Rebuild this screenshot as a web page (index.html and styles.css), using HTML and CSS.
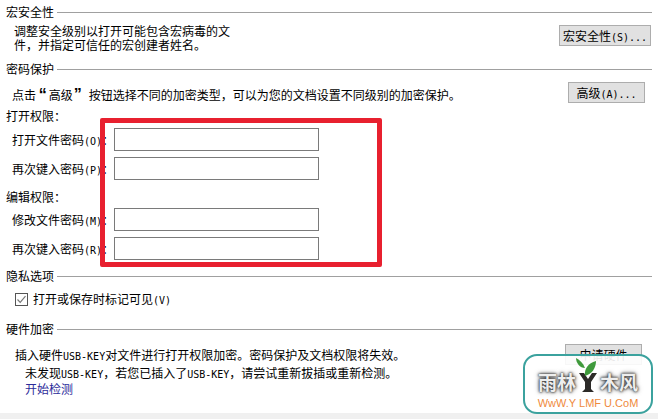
FILE: index.html
```html
<!DOCTYPE html>
<html lang="zh-CN">
<head>
    <meta charset="UTF-8">
    <title>文档加密</title>
    <link rel="stylesheet" href="styles.css">
</head>
<body>
    <div class="panel">
        <section class="group group-macro">
            <div class="group-title"><span>宏安全性</span></div>
            <div class="row">
                <p class="macro-text">调整安全级别以打开可能包含宏病毒的文<br>件，并指定可信任的宏创建者姓名。</p>
                <button class="btn btn-macro">宏安全性<span class="latin">(S)...</span></button>
            </div>
        </section>

        <section class="group group-password">
            <div class="group-title"><span>密码保护</span></div>
            <div class="row">
                <p class="password-text">点击 <span class="quote quote-open">“</span>高级<span class="quote quote-close">”</span>按钮选择不同的加密类型，可以为您的文档设置不同级别的加密保护。</p>
                <button class="btn btn-advanced">高级<span class="latin">(A)...</span></button>
            </div>
        </section>

        <div class="perm-title">打开权限：</div>
        <div class="field">
            <label>打开文件密码<span class="latin">(O)</span>：</label>
            <input type="text">
        </div>
        <div class="field">
            <label>再次键入密码<span class="latin">(P)</span>：</label>
            <input type="text">
        </div>

        <div class="perm-title perm-edit">编辑权限：</div>
        <div class="field">
            <label>修改文件密码<span class="latin">(M)</span>：</label>
            <input type="text">
        </div>
        <div class="field">
            <label>再次键入密码<span class="latin">(R)</span>：</label>
            <input type="text">
        </div>

        <section class="group group-privacy">
            <div class="group-title"><span>隐私选项</span></div>
            <label class="check">
                <svg class="check-box" width="13" height="13" viewBox="0 0 13 13">
                    <rect x="0.5" y="0.5" width="12" height="12" fill="#fff" stroke="#555"/>
                    <path d="M2.5 6.5 L5.2 9.3 L10.5 3.2" fill="none" stroke="#777" stroke-width="1.2"/>
                </svg>
                <span>打开或保存时标记可见<span class="latin">(V)</span></span>
            </label>
        </section>

        <section class="group group-hardware">
            <div class="group-title"><span>硬件加密</span></div>
            <div class="row">
                <div class="hardware-text">
                    <p>插入硬件<span class="latin">USB-KEY</span>对文件进行打开权限加密。密码保护及文档权限将失效。</p>
                    <div class="hardware-status">
                        <p>未发现<span class="latin">USB-KEY</span>，若您已插入了<span class="latin">USB-KEY</span>，请尝试重新拔插或重新检测。</p>
                        <a href="#">开始检测</a>
                    </div>
                </div>
                <button class="btn btn-hardware">申请硬件</button>
            </div>
        </section>
    </div>
    <div class="footer-strip"></div>

    <!-- annotation drawn over the dialog -->
    <div class="red-box"></div>

    <!-- site watermark -->
    <div class="watermark">
        <div class="wm-name">
            <span>雨林</span>
            <svg class="wm-tree" width="24" height="36" viewBox="0 0 24 36">
                <path d="M3 16 L8 16 L12 22 L16 16 L21 16 L15 25 L15 32 L18 35 L6 35 L9 32 L9 25 Z" fill="#2c2a28"/>
                <path d="M9 19 C8 12 12 6 20 4 C20 11 16 17 9 19 Z" fill="#3f9a3c"/>
                <path d="M9 11 C7 6 4 3 0 1 C0 6 4 11 9 11 Z" fill="#3f9a3c"/>
            </svg>
            <span>木风</span>
        </div>
        <div class="wm-url">WwW.Y LMF U.CoM</div>
    </div>
</body>
</html>
```

FILE: styles.css
```css
html, body {
    margin: 0;
    padding: 0;
}

body {
    width: 658px;
    height: 419px;
    overflow: hidden;
    position: relative;
    background-color: #fff;
    font-family: "Noto Sans CJK SC", sans-serif;
    font-size: 12px;
    line-height: 14px;
    color: #000;
}

p {
    margin: 0;
}

.latin {
    font-family: "DejaVu Sans Mono", monospace;
    font-size: 10px;
    line-height: 1;
}

.quote {
    font-family: "Liberation Sans", sans-serif;
    font-size: 16px;
    line-height: 1;
    font-weight: 700;
}

.quote-open {
    margin-right: 2px;
}

.quote-close {
    margin: 0 7px 0 1px;
}

.panel {
    height: 413px;
    padding: 5px 6px 0 6px;
    box-sizing: border-box;
}

.group-title {
    display: flex;
    align-items: center;
    gap: 3px;
    height: 14px;
}

.group-title::after {
    content: "";
    flex: 1;
    height: 1px;
    background-color: #a0a0a0;
}

.row {
    display: flex;
    justify-content: space-between;
    align-items: flex-start;
}

.btn {
    font: inherit;
    color: #000;
    background-color: #e1e1e1;
    border: 1px solid #adadad;
    padding: 0;
    height: 21px;
}

.group-macro {
    height: 57px;
}

.group-macro .row {
    padding-top: 5px;
}

.macro-text {
    margin-left: 8px;
}

.btn-macro {
    width: 92px;
    margin: 1px 1px 0 0;
}

.group-password {
    height: 47px;
}

.group-password .row {
    padding-top: 6px;
}

.password-text {
    margin: 5px 0 0 6px;
}

.btn-advanced {
    width: 77px;
    margin-right: 7px;
}

.perm-title {
    height: 14px;
    margin-bottom: 5px;
}

.perm-edit {
    margin-top: 10px;
    margin-bottom: 4px;
}

.field {
    display: flex;
    align-items: center;
    height: 23px;
    margin-bottom: 6px;
    padding-left: 6px;
}

.field label {
    width: 102px;
    white-space: nowrap;
}

.field input {
    width: 205px;
    height: 23px;
    box-sizing: border-box;
    border: 1px solid #7a7a7a;
    background-color: #fff;
    padding: 0 2px;
    margin: 0;
    outline: none;
}

.group-privacy {
    margin-top: 9px;
    height: 53px;
}

.check {
    display: flex;
    align-items: center;
    gap: 5px;
    margin: 9px 0 0 9px;
}

.check-box {
    flex: none;
}

.hardware-text {
    margin: 12px 0 0 9px;
}

.hardware-status {
    margin: 3px 0 0 10px;
    line-height: 16px;
}

.hardware-status a {
    color: #2b2b9a;
    text-decoration: none;
}

.btn-hardware {
    width: 77px;
    margin: 8px 10px 0 0;
}

.footer-strip {
    height: 6px;
    background-color: #f0f0f0;
}

/* red annotation box, sits over the form */
.red-box {
    position: absolute;
    left: 100px;
    top: 118px;
    width: 282px;
    height: 149px;
    box-sizing: border-box;
    border: 5px solid #e8202f;
    border-radius: 2px;
}

.watermark {
    position: absolute;
    left: 523px;
    top: 354px;
    width: 130px;
    height: 60px;
    box-sizing: border-box;
    border: 2px solid #3ba29e;
    border-radius: 14px;
    background-color: rgba(255, 255, 255, 0.9);
}

.wm-name {
    display: flex;
    justify-content: center;
    align-items: flex-end;
    height: 37px;
    font-size: 19px;
    line-height: 22px;
    font-weight: 700;
    color: #eee;
    text-shadow: 0 0 2px #333, 0 0 3px #444, 0 0 5px #666;
    white-space: nowrap;
}

.wm-tree {
    flex: none;
}

.wm-url {
    margin-top: 4px;
    text-align: center;
    font-family: "Liberation Sans", sans-serif;
    font-size: 11px;
    line-height: 13px;
    color: #ef8a3c;
    white-space: nowrap;
}
```
